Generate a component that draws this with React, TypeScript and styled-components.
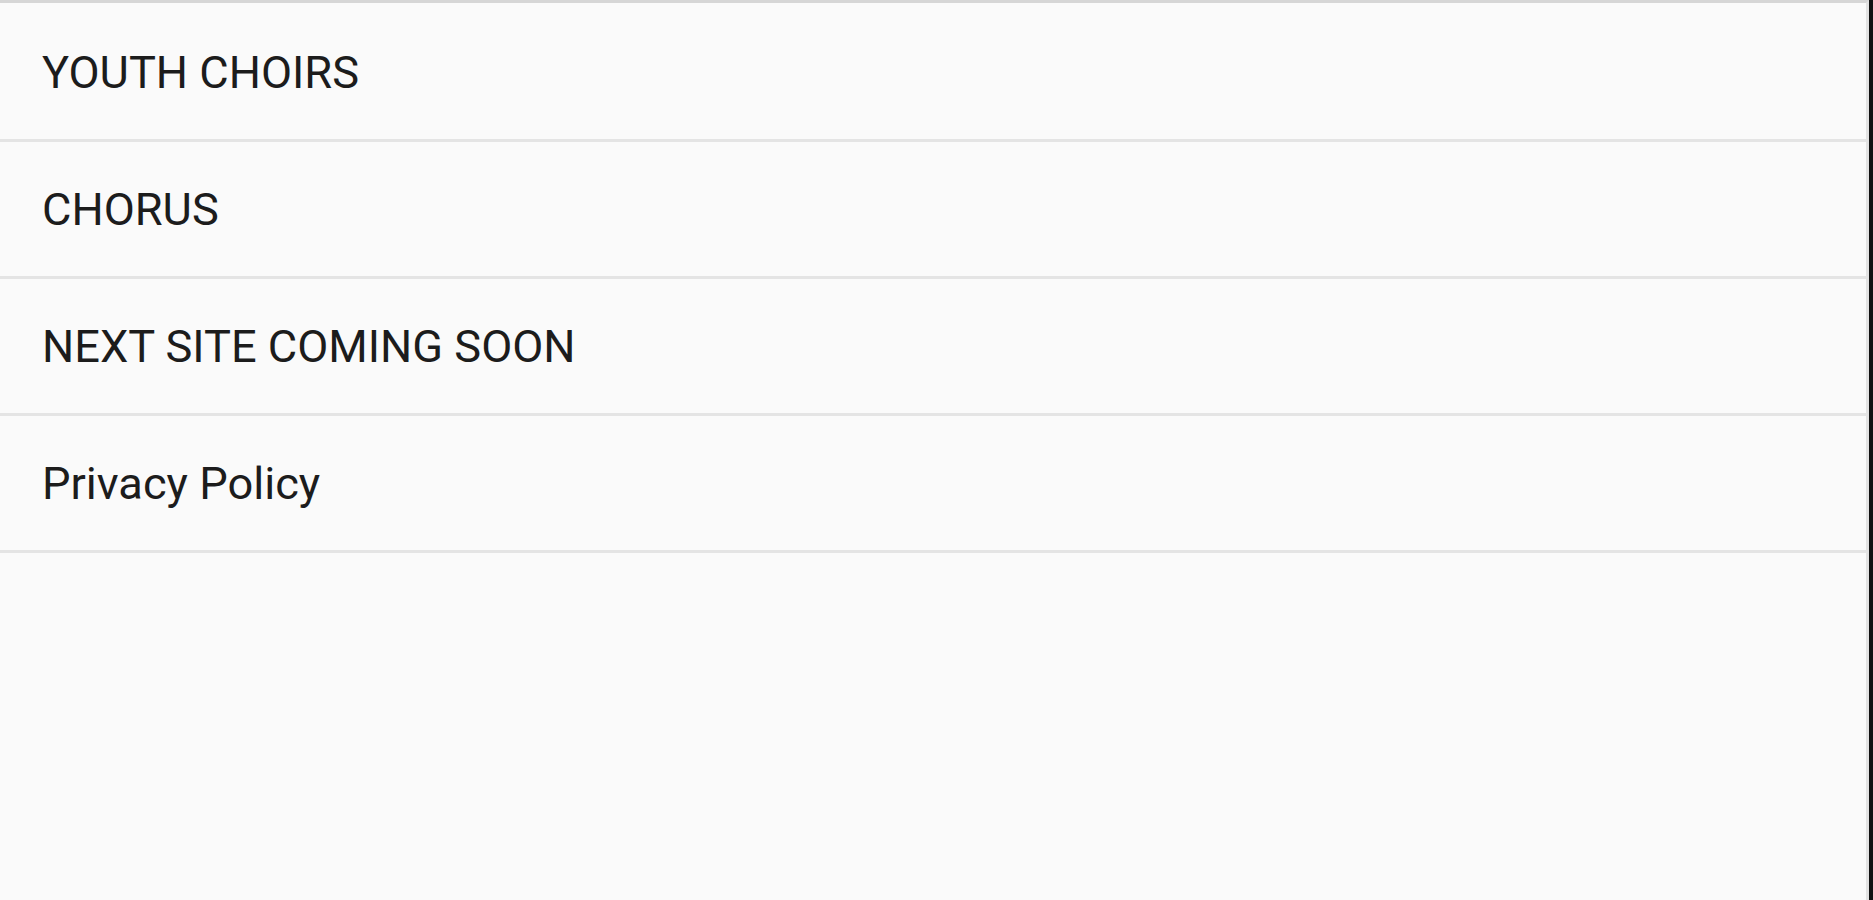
import React from "react";
import styled, { createGlobalStyle } from "styled-components";

const GlobalStyle = createGlobalStyle`
  html, body {
    margin: 0;
    padding: 0;
    background: #fafafa;
  }
  body {
    font-family: Roboto, "Noto Sans", "Liberation Sans", sans-serif;
  }
`;

const links = ["YOUTH CHOIRS", "CHORUS", "NEXT SITE COMING SOON", "Privacy Policy"];

const App: React.FC = () => {
  return (
    <>
      <GlobalStyle />
      <Page>
        <Drawer>
          <NavList>
            {links.map((label) => (
              <NavItem key={label}>
                <NavLink href="#">{label}</NavLink>
              </NavItem>
            ))}
          </NavList>
        </Drawer>
        <Edge />
      </Page>
    </>
  );
};

export default App;

const Page = styled.div`
  display: flex;
  height: 100vh;
  width: 100%;
  background: #fafafa;
`;

const Drawer = styled.nav`
  flex: 1;
  border-top: 3px solid #d6d6d6;
  border-right: 3px solid #e2e2e2;
  background: #fafafa;
`;

const Edge = styled.div`
  width: 4px;
  background: #111;
`;

const NavList = styled.ul`
  list-style: none;
  margin: 0;
  padding: 2px 0 0;
`;

const NavItem = styled.li`
  display: flex;
  align-items: center;
  height: 134px;
  border-bottom: 3px solid #e4e4e4;
`;

const NavLink = styled.a`
  padding-left: 42px;
  font-size: 45.2px;
  color: #1c1c1c;
  text-decoration: none;
`;
